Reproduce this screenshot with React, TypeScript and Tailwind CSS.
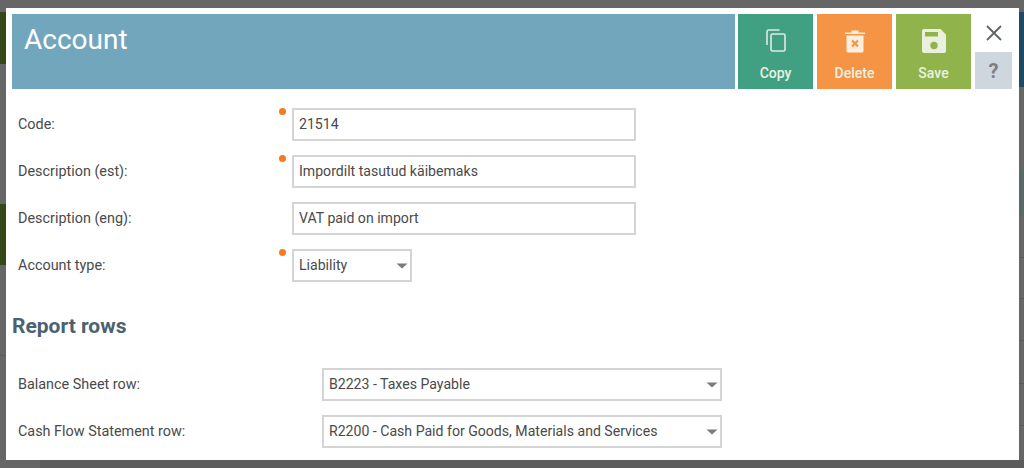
import React from "react";

function Arrow() {
  return (
    <svg width="12" height="6" viewBox="0 0 12 6" className="shrink-0">
      <path d="M0.5 0.5H11.5L6 5.5Z" fill="#7a7a7a" />
    </svg>
  );
}

function Dot() {
  return <span className="absolute left-[-15px] top-[-2px] w-[7px] h-[7px] rounded-full bg-[#f47b20]" />;
}

function Row({ label, children, mt }: { label: string; children: React.ReactNode; mt: string }) {
  return (
    <div className={`flex items-center ${mt}`}>
      <div className="w-[280px] pl-[6px] pt-px text-[14.4px] text-[#4a4a4a] leading-[20px]">{label}</div>
      {children}
    </div>
  );
}

function Input({ value, required }: { value: string; required?: boolean }) {
  return (
    <div className="relative w-[344px] h-[33px] border-2 border-[#d4d4d4] flex items-center pl-[5px] pt-px text-[14.1px] text-[#4a4a4a]">
      {required && <Dot />}
      {value}
    </div>
  );
}

function Select({ value, w, required }: { value: string; w: string; required?: boolean }) {
  return (
    <div className={`relative ${w} h-[33px] border-2 border-[#d4d4d4] flex items-center justify-between pl-[5px] pr-[2px] text-[14.1px] text-[#4a4a4a]`}>
      {required && <Dot />}
      <span className="pt-px">{value}</span>
      <Arrow />
    </div>
  );
}

function Action({ label, bg, icon }: { label: string; bg: string; icon: React.ReactNode }) {
  return (
    <div className={`w-[75px] h-[75px] ${bg} flex flex-col items-center text-[14px] font-medium text-[#e9f1e4]`}>
      <div className="h-[50px] flex items-center justify-center pt-[4px]">{icon}</div>
      <div className="leading-[18px]">{label}</div>
    </div>
  );
}

export default function App() {
  return (
    <div className="relative w-[1024px] h-[468px] overflow-hidden bg-[#666666] font-['Roboto',sans-serif]">
      <div className="absolute left-0 top-[12px] w-[8px] h-[52px] bg-[#35481a]" />
      <div className="absolute left-0 top-[204px] w-[8px] h-[61px] bg-[#35481a]" />
      <div className="absolute left-0 top-[355px] w-[8px] h-px bg-[#5a5a5a]" />
      <div className="absolute left-[40px] right-0 top-[460px] h-[8px] bg-[#5c5c5c]" />
      <div className="absolute right-0 top-[12px] w-[8px] h-[75px] bg-[#1f4a62]" />
      <div className="absolute right-0 top-[170px] w-[8px] h-[46px] bg-[#5a6868]" />
      <div className="absolute right-0 top-[257px] w-[8px] h-px bg-[#5a5a5a]" />
      <div className="absolute right-0 top-[298px] w-[8px] h-px bg-[#5a5a5a]" />
      <div className="absolute right-0 top-[340px] w-[8px] h-px bg-[#5a5a5a]" />
      <div className="absolute right-0 top-[383px] w-[8px] h-px bg-[#5a5a5a]" />
      <div className="absolute right-0 top-[425px] w-[8px] h-px bg-[#5a5a5a]" />
      <div className="absolute left-[6px] top-[8px] w-[1013px] h-[452px] bg-white pl-[6px] pr-[7px] pt-[6px] overflow-hidden">
        <div className="flex">
          <div className="w-[723px] h-[75px] bg-[#72a6bd] pl-[12px] pt-[9px] text-[28px] leading-[34px] text-white">Account</div>
          <div className="flex ml-[3px] gap-[4px]">
            <Action
              label="Copy"
              bg="bg-[#42a082]"
              icon={
                <svg width="20" height="24" viewBox="0 0 20 24" fill="none" stroke="#dcebe4" strokeWidth="1.6">
                  <path d="M13.5 1H3a2 2 0 0 0-2 2v13" />
                  <rect x="5" y="5" width="14" height="17" rx="1.5" />
                </svg>
              }
            />
            <Action
              label="Delete"
              bg="bg-[#f69445]"
              icon={
                <svg width="20" height="24" viewBox="0 0 20 24">
                  <path d="M0 3.5H6.5V1.5H13.5V3.5H20V5H0Z" fill="#fdeedd" />
                  <path d="M1.5 6.5H18.5V22a1.5 1.5 0 0 1-1.5 1.5H3A1.5 1.5 0 0 1 1.5 22Z" fill="#fdeedd" />
                  <path d="M7 11.5L13 17.5M13 11.5L7 17.5" stroke="#f69445" strokeWidth="2.2" />
                </svg>
              }
            />
            <Action
              label="Save"
              bg="bg-[#90b44b]"
              icon={
                <svg width="24" height="24" viewBox="0 0 24 24">
                  <path d="M2 0H18.5L24 5.5V22a2 2 0 0 1-2 2H2a2 2 0 0 1-2-2V2a2 2 0 0 1 2-2Z" fill="#e9f0db" />
                  <rect x="3" y="3" width="13" height="4.5" fill="#90b44b" />
                  <circle cx="12" cy="16.5" r="3.7" fill="#90b44b" />
                </svg>
              }
            />
          </div>
          <div className="w-[37px] ml-[4px] flex flex-col">
            <div className="h-[38px] flex items-center justify-center">
              <svg width="18" height="18" viewBox="0 0 18 18" stroke="#5f6468" strokeWidth="1.8" className="mt-[-1px]">
                <path d="M2 2L16 16M16 2L2 16" />
              </svg>
            </div>
            <div className="h-[37px] bg-[#ced6de] flex items-center justify-center text-[20px] font-bold text-[#7a7f85]">?</div>
          </div>
        </div>
        <Row label="Code:" mt="mt-[19px]"><Input value="21514" required /></Row>
        <Row label="Description (est):" mt="mt-[14px]"><Input value="Impordilt tasutud käibemaks" required /></Row>
        <Row label="Description (eng):" mt="mt-[14px]"><Input value="VAT paid on import" /></Row>
        <Row label="Account type:" mt="mt-[14px]"><Select value="Liability" w="w-[120px]" required /></Row>
        <div className="mt-[31px] text-[21px] leading-[26px] font-bold text-[#4a6270]">Report rows</div>
        <div className="mt-[29px] flex items-center">
          <div className="w-[310px] pl-[6px] pt-px text-[14.4px] text-[#4a4a4a]">Balance Sheet row:</div>
          <Select value="B2223 - Taxes Payable" w="w-[400px]" />
        </div>
        <div className="mt-[14px] flex items-center">
          <div className="w-[310px] pl-[6px] pt-px text-[14.4px] text-[#4a4a4a]">Cash Flow Statement row:</div>
          <Select value="R2200 - Cash Paid for Goods, Materials and Services" w="w-[400px]" />
        </div>
      </div>
    </div>
  );
}
